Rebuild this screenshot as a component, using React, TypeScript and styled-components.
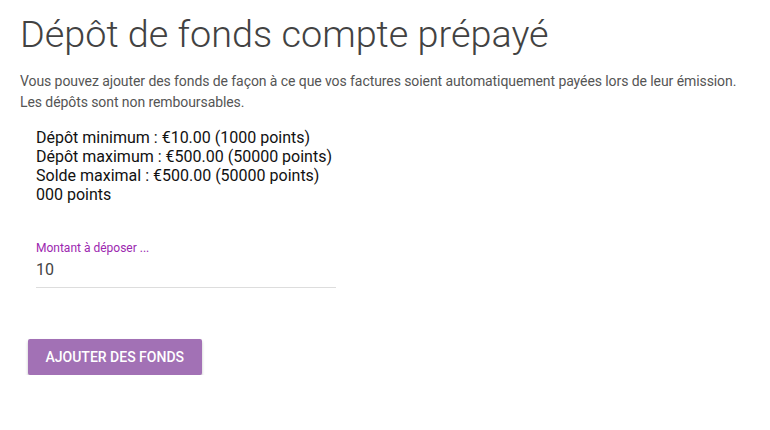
import React from "react";
import styled, { createGlobalStyle } from "styled-components";

const Global = createGlobalStyle`
  html, body { margin: 0; padding: 0; background: #fff; }
  body { font-family: Roboto, "Noto Sans", sans-serif; }
  * { box-sizing: border-box; }
`;

const Page = styled.div`
  padding: 8px 20px 0 20px;
  display: flex;
  flex-direction: column;
`;

const Title = styled.h1`
  margin: 0;
  font-weight: 300;
  font-size: 37.8px;
  line-height: 52px;
  color: #424242;
`;

const Intro = styled.p`
  margin: 11px 0 0 0;
  font-size: 14px;
  line-height: 21px;
  letter-spacing: -0.08px;
  color: #555;
`;

const Limits = styled.div`
  margin: 15px 0 0 16px;
  font-size: 16px;
  line-height: 19px;
  color: #111;
  display: flex;
  flex-direction: column;
`;

const Field = styled.div`
  margin: 36px 0 0 16px;
  width: 300px;
  display: flex;
  flex-direction: column;
  border-bottom: 1px solid #ddd;
`;

const Label = styled.label`
  font-size: 12px;
  line-height: 16px;
  color: #9c27b0;
`;

const Value = styled.div`
  margin-top: 1px;
  font-size: 16px;
  line-height: 26px;
  color: #444;
  padding-bottom: 4px;
`;

const Button = styled.button`
  margin: 51px 0 0 8px;
  align-self: flex-start;
  height: 36px;
  padding: 0 17.5px;
  border: none;
  border-radius: 2px;
  background: #a271b5;
  color: #fff;
  font-family: Roboto, sans-serif;
  font-weight: 500;
  font-size: 14px;
  text-transform: uppercase;
  box-shadow: 0 2px 3px rgba(0,0,0,0.25);
`;

export default function App() {
  return (
    <Page>
      <Global />
      <Title>Dépôt de fonds compte prépayé</Title>
      <Intro>
        Vous pouvez ajouter des fonds de façon à ce que vos factures soient automatiquement payées lors de leur émission.
        <br />
        Les dépôts sont non remboursables.
      </Intro>
      <Limits>
        <span>Dépôt minimum : €10.00 (1000 points)</span>
        <span>Dépôt maximum : €500.00 (50000 points)</span>
        <span>Solde maximal : €500.00 (50000 points)</span>
        <span>000 points</span>
      </Limits>
      <Field>
        <Label>Montant à déposer ...</Label>
        <Value>10</Value>
      </Field>
      <Button>Ajouter des fonds</Button>
    </Page>
  );
}
